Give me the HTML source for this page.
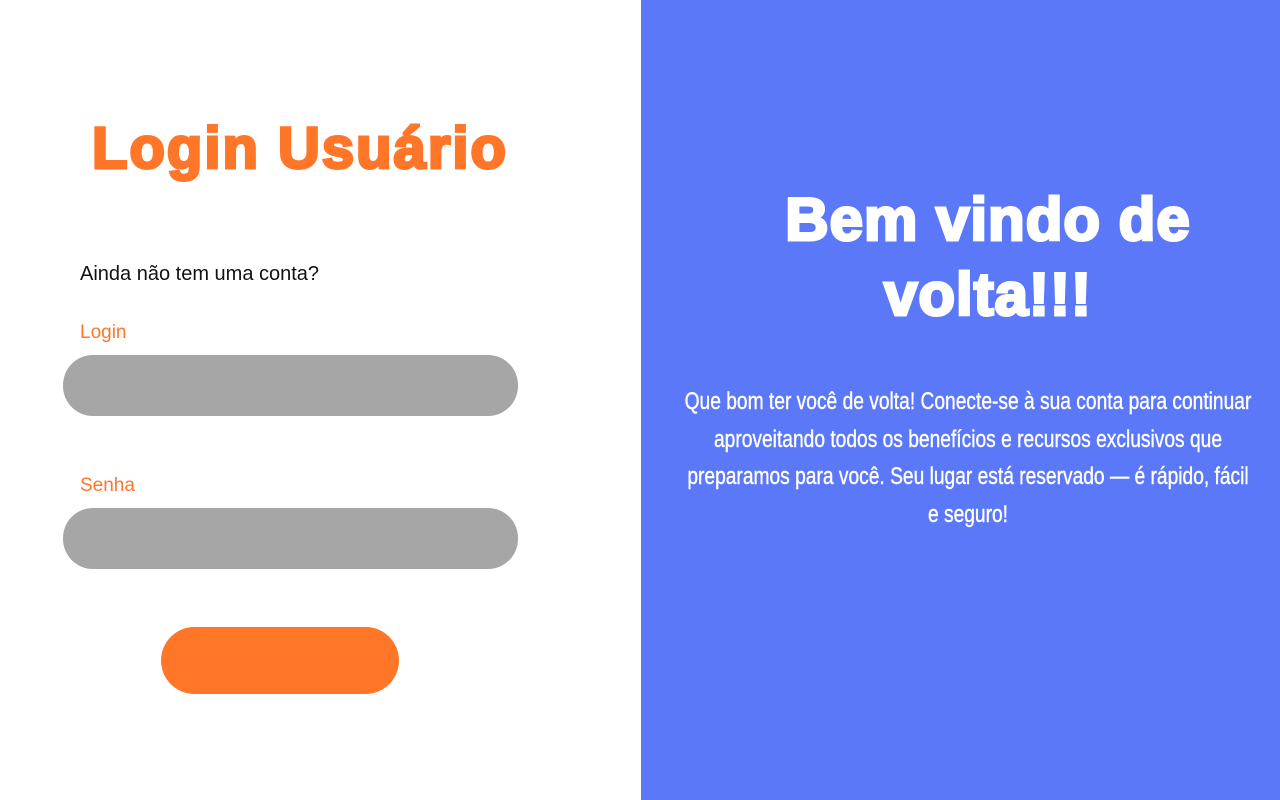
<!DOCTYPE html>
<html><head><meta charset="utf-8"><style>
html,body{margin:0;padding:0;width:1280px;height:800px;overflow:hidden;background:#fff;font-family:"Liberation Sans",sans-serif}
.abs{position:absolute}
.right{left:641px;top:0;width:639px;height:800px;background:#5b78f8}
.t1{left:0px;top:114px;width:600px;text-align:center;color:#ff7628;font-size:58px;font-weight:bold;letter-spacing:2px;line-height:70px;-webkit-text-stroke:3px #ff7628}
.t2{left:688px;top:182px;width:600px;text-align:center;color:#fff;font-size:60px;font-weight:bold;line-height:75px;letter-spacing:1px;-webkit-text-stroke:3px #fff}
.p{left:568px;top:383px;width:800px;text-align:center;color:#fff;font-size:24px;line-height:37.5px;transform:scaleX(0.8);transform-origin:400px 0;-webkit-text-stroke:0.4px #fff}
.lbl{color:#ff7628;font-size:19px}
.inp{background:#a6a6a6;border-radius:30px;left:63px;width:455px;height:61px}
</style></head><body>
<div class="abs t1">Login Usuário</div>
<div class="abs" style="left:80px;top:263px;font-size:20px;color:#111">Ainda não tem uma conta?</div>
<div class="abs lbl" style="left:80px;top:322px">Login</div>
<div class="abs inp" style="top:355px"></div>
<div class="abs lbl" style="left:80px;top:475px">Senha</div>
<div class="abs inp" style="top:508px"></div>
<div class="abs" style="left:161px;top:627px;width:238px;height:67px;border-radius:34px;background:#ff7628"></div>
<div class="abs right"></div>
<div class="abs t2">Bem vindo de<br>volta!!!</div>
<div class="abs p">Que bom ter você de volta! Conecte-se à sua conta para continuar<br>aproveitando todos os benefícios e recursos exclusivos que<br>preparamos para você. Seu lugar está reservado — é rápido, fácil<br>e seguro!</div>
</body></html>
